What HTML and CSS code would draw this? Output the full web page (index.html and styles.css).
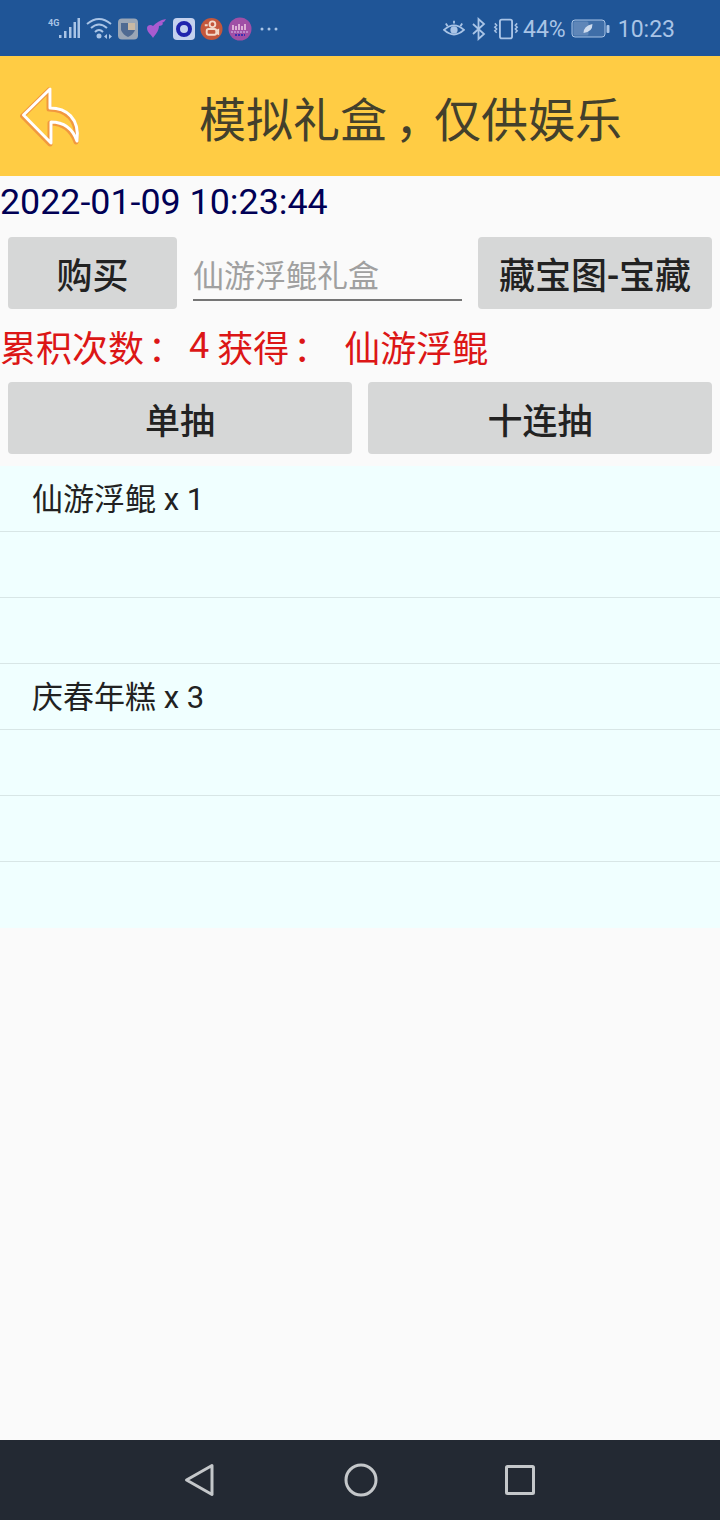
FILE: index.html
```html
<!DOCTYPE html>
<html lang="zh">
<head>
  <meta charset="UTF-8" />
  <title>模拟礼盒</title>
  <link rel="stylesheet" href="styles.css">
</head>
<body>
  <div class="status-bar">
    <div class="status-left">
      <svg width="33" height="24" viewBox="0 0 33 24">
        <text x="0" y="9" class="net-label">4G</text>
        <g fill="#a9c4e6">
          <rect x="11" y="18" width="2.500" height="3"/>
          <rect x="16" y="14" width="2.500" height="7"/>
          <rect x="21" y="10" width="2.500" height="11"/>
          <rect x="25.500" y="5" width="2.500" height="16"/>
          <rect x="29.500" y="1" width="2.500" height="20"/>
        </g>
      </svg>
      <svg width="27" height="24" viewBox="0 0 27 24">
        <g fill="none" stroke="#a9c4e6" stroke-width="2">
          <path d="M1 7 Q13 -3 25 7"/>
          <path d="M5 11 Q13 4 21 11"/>
          <path d="M9 15 Q13 11 17 15"/>
        </g>
        <circle cx="13" cy="19" r="2.500" fill="#a9c4e6"/>
        <path d="M18 19.500l3-2.500v5zM23 17l3 2.500-3 2.500z" fill="#a9c4e6"/>
      </svg>
      <svg width="20" height="22" viewBox="0 0 20 22">
        <rect width="20" height="21" y="0.500" rx="4" fill="#9aa6b6"/>
        <path d="M3 5h14v7q-2 5-7 7q-5-2-7-7z" fill="#4f6a92"/>
        <path d="M10 5h7v7h-7z" fill="#c9b9a4"/>
      </svg>
      <svg width="25" height="22" viewBox="0 0 25 22">
        <path d="M10 20c-1-3-6-5-6-10 0-3 4-4 6-2 3-3 7-6 13-7-1 2-2 3-4 4 1 0 1 1 1 1-1 1-2 2-4 2 0 5-4 9-6 12z" fill="#a95bd0"/>
      </svg>
      <svg width="22" height="22" viewBox="0 0 22 22">
        <rect width="22" height="22" rx="4" fill="#c4d1ee"/>
        <circle cx="11" cy="11" r="6" fill="none" stroke="#1f24ad" stroke-width="4"/>
      </svg>
      <svg width="23" height="24" viewBox="0 0 24 24">
        <circle cx="12" cy="12" r="11.500" fill="#c4573c"/>
        <g fill="none" stroke="#f3d9c9" stroke-width="2">
          <circle cx="13" cy="7" r="3"/>
          <rect x="7" y="12" width="10" height="6" rx="2"/>
          <path d="M5 8h3M17 14l2-1v4l-2-1"/>
        </g>
      </svg>
      <svg width="24" height="24" viewBox="0 0 24 24">
        <circle cx="12" cy="12" r="11.500" fill="#a04fa6"/>
        <path d="M5 8v5M8 9v4M11 7v6M14 9v4M17 7v6" stroke="#f2cfe6" stroke-width="1.500"/>
        <path d="M3 15h18" stroke="#d7c4ee" stroke-width="1" stroke-dasharray="2 1"/>
        <path d="M7 18h10" stroke="#3a2fb0" stroke-width="2" stroke-dasharray="2 1"/>
      </svg>
      <svg width="18" height="6" viewBox="0 0 18 6" class="icon-dots">
        <g fill="#a9c4e6"><circle cx="2" cy="3" r="1.500"/><circle cx="9" cy="3" r="1.500"/><circle cx="16" cy="3" r="1.500"/></g>
      </svg>
    </div>
    <div class="status-right">
      <svg width="22" height="20" viewBox="0 0 24 22" class="icon-eye">
        <g fill="none" stroke="#a9c4e6" stroke-width="2">
          <path d="M1 12q11-10 22 0q-11 10-22 0z"/>
          <path d="M3 5l2 3M12 2v3M21 5l-2 3"/>
        </g>
        <circle cx="12" cy="12" r="4" fill="#a9c4e6"/>
      </svg>
      <svg width="14" height="24" viewBox="0 0 14 24" class="icon-bt">
        <path d="M1 7l11 10-5.500 5V2L12 7 1 17" fill="none" stroke="#a9c4e6" stroke-width="1.800"/>
      </svg>
      <svg width="28" height="24" viewBox="0 0 30 24" class="icon-vib">
        <rect x="8.500" y="2" width="13" height="20" rx="2" fill="none" stroke="#a9c4e6" stroke-width="2"/>
        <path d="M3 6l2 2-2 2 2 2-2 2 2 2M27 6l-2 2 2 2-2 2 2 2-2 2" fill="none" stroke="#a9c4e6" stroke-width="1.600"/>
      </svg>
      <span class="percent">44%</span>
      <svg width="39" height="20" viewBox="0 0 38 20" class="icon-battery">
        <rect x="0.500" y="1" width="33" height="17" rx="3" fill="#3f6ea8" stroke="#a9c4e6" stroke-width="1"/>
        <rect x="2" y="2.500" width="15" height="14" rx="1.500" fill="#5f86b8"/>
        <path d="M12 14q0-7 9-9q0 8-9 9z" fill="#cfdcee"/>
        <rect x="35" y="6" width="3" height="8" rx="1" fill="#a9c4e6"/>
      </svg>
      <span class="clock">10:23</span>
    </div>
  </div>

  <header class="title-bar">
    <svg class="back-icon" width="62" height="66" viewBox="0 0 62 66">
      <path d="M30 6 L30 25 C46 25 60 35 57 58 C52 44 42 39 31 39 L31 60 L3.500 32 Z" fill="none" stroke="#e8743c" stroke-opacity="0.600" stroke-width="5" stroke-linejoin="round" transform="translate(-1 1)"/>
      <path d="M30 6 L30 25 C46 25 60 35 57 58 C52 44 42 39 31 39 L31 60 L3.500 32 Z" fill="none" stroke="#fff" stroke-width="3" stroke-linejoin="round"/>
    </svg>
    <h1>模拟礼盒<span class="comma">，</span>仅供娱乐</h1>
  </header>

  <main class="content">
    <div class="date-line">2022-01-09 10:23:44</div>

    <div class="buy-row">
      <button class="btn btn-buy">购买</button>
      <div class="box-input">仙游浮鲲礼盒</div>
      <button class="btn btn-map">藏宝图-宝藏</button>
    </div>

    <div class="result-line">
      <span>累积次数<span class="colon">：</span></span><span class="count">4</span><span class="got">获得<span class="colon">：</span></span><span class="prize">仙游浮鲲</span>
    </div>

    <div class="draw-row">
      <button class="btn">单抽</button>
      <button class="btn">十连抽</button>
    </div>

    <ul class="prize-list">
      <li>仙游浮鲲 x 1</li>
      <li></li>
      <li></li>
      <li>庆春年糕 x 3</li>
      <li></li>
      <li></li>
      <li></li>
    </ul>
  </main>

  <nav class="nav-bar">
    <svg width="32" height="34" viewBox="0 0 32 34">
      <path d="M28 2.500 L2.500 17 L28 31.500 Z" fill="none" stroke="#c4c7ca" stroke-width="3" stroke-linejoin="round"/>
    </svg>
    <svg width="34" height="34" viewBox="0 0 34 34">
      <circle cx="17" cy="17" r="15" fill="none" stroke="#c4c7ca" stroke-width="3"/>
    </svg>
    <svg width="30" height="30" viewBox="0 0 30 30">
      <rect x="1.500" y="1.500" width="27" height="27" rx="1" fill="none" stroke="#c4c7ca" stroke-width="3"/>
    </svg>
  </nav>
</body>
</html>
```

FILE: styles.css
```css
* {
  box-sizing: border-box;
}

body {
  margin: 0;
  height: 1520px;
  display: flex;
  flex-direction: column;
  background-color: #fafafa;
  font-family: Roboto, "Noto Sans CJK SC", sans-serif;
  overflow: hidden;
}

/* punctuation sits further right in its cell than in the SC font */
.comma {
  margin-left: 8px;
  letter-spacing: -8px;
}

.colon {
  margin-left: 4px;
  letter-spacing: -4px;
}

/* Status bar */
.status-bar {
  height: 56px;
  background-color: #1f5597;
  display: flex;
  justify-content: space-between;
  align-items: center;
  padding: 2px 45px 0 48px;
  flex-shrink: 0;
}

.status-left,
.status-right {
  display: flex;
  align-items: center;
}

.status-left {
  gap: 5px;
}

.net-label {
  font-size: 9px;
  font-weight: bold;
  fill: #a9c4e6;
}

.icon-dots {
  margin-left: 3px;
}

.percent,
.clock {
  font-size: 23px;
  color: #a9c4e6;
}

.icon-bt {
  margin-left: 7px;
}

.icon-vib {
  margin-left: 6px;
}

.percent {
  margin-left: 3px;
}

.icon-battery {
  margin-left: 5px;
}

.clock {
  margin-left: 8px;
}

/* Title */
.title-bar {
  height: 120px;
  background-color: #ffcc44;
  display: flex;
  align-items: center;
  padding-left: 20px;
  flex-shrink: 0;
}

.title-bar h1 {
  margin: 0 0 0 117px;
  font-size: 47px;
  font-weight: normal;
  color: #43402c;
}

/* Main */
.content {
  flex: 1;
}

.date-line {
  height: 52px;
  font-size: 35.800px;
  line-height: 52px;
  color: #000055;
}

.btn {
  height: 72px;
  border: none;
  border-radius: 4px;
  background-color: #d6d7d7;
  color: #222;
  font-family: inherit;
  font-size: 36px;
  font-weight: 500;
  padding: 0;
}

.buy-row {
  display: flex;
  gap: 16px;
  padding: 9px 8px 0;
}

.btn-buy {
  width: 169px;
}

.btn-map {
  width: 234px;
}

.box-input {
  width: 269px;
  height: 64px;
  border-bottom: 2px solid #757575;
  padding-top: 17px;
  font-size: 31px;
  line-height: 45px;
  color: #a0a0a0;
}

.result-line {
  height: 73px;
  display: flex;
  align-items: center;
  font-size: 36px;
  color: #dc1616;
  white-space: nowrap;
}

.count {
  margin-left: 9px;
}

.got {
  margin-left: 8px;
}

.prize {
  margin-left: 19px;
}

.draw-row {
  display: flex;
  gap: 16px;
  padding: 0 8px;
}

.draw-row .btn {
  flex: 1;
  font-size: 35px;
}

.prize-list {
  list-style: none;
  margin: 12px 0 0;
  padding: 0;
  background-color: #f0ffff;
}

.prize-list li {
  height: 66px;
  padding-left: 32px;
  border-bottom: 1px solid #d8e6e6;
  font-size: 31px;
  line-height: 68px;
  color: #222;
}

.prize-list li:last-child {
  border-bottom: none;
}

/* Nav */
.nav-bar {
  height: 80px;
  background-color: #232933;
  display: flex;
  align-items: center;
  padding: 0 185px 0 184px;
  justify-content: space-between;
  flex-shrink: 0;
}
```
